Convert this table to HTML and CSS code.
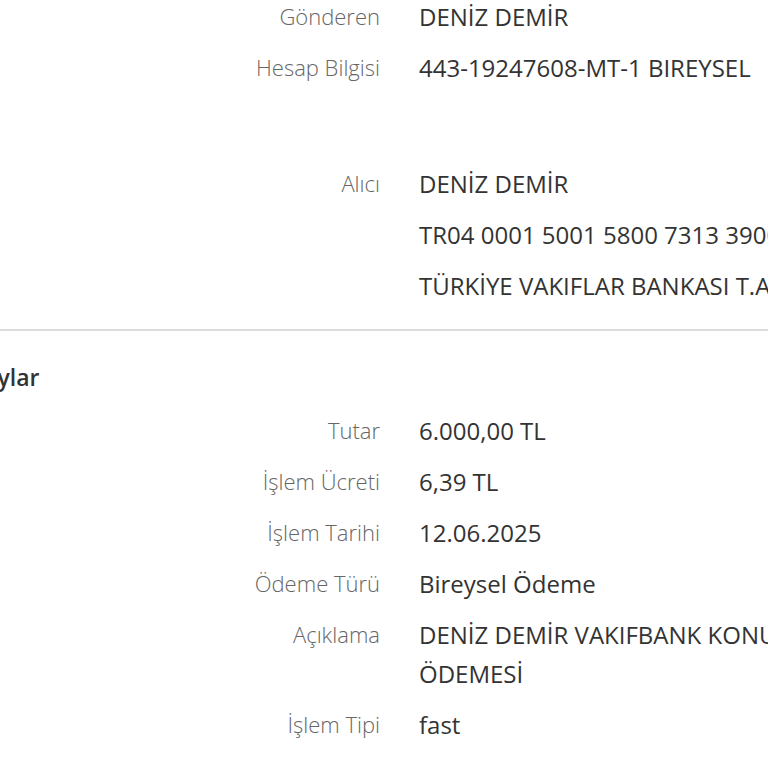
FILE: index.html
```html
<!DOCTYPE html>
<html lang="tr">
<head>
  <meta charset="UTF-8"/>
  <meta name="viewport" content="width=device-width, initial-scale=1.0"/>
  <title>Dekont</title>
  <link rel="stylesheet" href="styles.css">
</head>
<body>
  <div class="receipt">
    <dl class="info sender">
      <dt>Gönderen</dt>
      <dd>DENİZ DEMİR</dd>
      <dt>Hesap Bilgisi</dt>
      <dd>443-19247608-MT-1 BIREYSEL</dd>
    </dl>

    <dl class="info receiver">
      <dt>Alıcı</dt>
      <dd>DENİZ DEMİR</dd>
      <dt></dt>
      <dd>TR04 0001 5001 5800 7313 3900 01</dd>
      <dt></dt>
      <dd>TÜRKİYE VAKIFLAR BANKASI T.A.O.</dd>
    </dl>

    <hr class="divider">

    <h2 class="section-title">Detaylar</h2>
    <dl class="info details">
      <dt>Tutar</dt>
      <dd>6.000,00 TL</dd>
      <dt>İşlem Ücreti</dt>
      <dd>6,39 TL</dd>
      <dt>İşlem Tarihi</dt>
      <dd>12.06.2025</dd>
      <dt>Ödeme Türü</dt>
      <dd>Bireysel Ödeme</dd>
      <dt>Açıklama</dt>
      <dd class="wrap">DENİZ DEMİR VAKIFBANK KONUT ÖDEMESİ</dd>
      <dt>İşlem Tipi</dt>
      <dd>fast</dd>
    </dl>
  </div>
</body>
</html>
```

FILE: styles.css
```css
:root {
  --label-color: #666666;
  --value-color: #333333;
  --line-color: #dcdcdc;
  --label-col: 435px;
  --col-gap: 39px;
  --row-gap: 12px;
}

*, *::before, *::after { box-sizing: border-box; }

body {
  margin: 0;
  background: #ffffff;
  font-family: 'Open Sans', 'Noto Sans', sans-serif;
  color: var(--value-color);
  overflow: hidden;
}

.receipt {
  width: 1000px;
  margin-left: -55px;
  margin-top: -3px;
}

.info {
  display: grid;
  grid-template-columns: var(--label-col) 1fr;
  column-gap: var(--col-gap);
  row-gap: var(--row-gap);
  margin: 0;
  line-height: 39px;
}

.info dt {
  text-align: right;
  color: var(--label-color);
  font-size: 22px;
  font-weight: 300;
}

.info dd {
  margin: 0;
  font-size: 24px;
  white-space: nowrap;
}

.info dd.wrap {
  white-space: normal;
  width: 440px;
}

.receiver { margin-top: 77px; }

.divider {
  border: none;
  border-top: 2px solid var(--line-color);
  margin: 24px 0 0;
}

.section-title {
  margin: 26px 0 14px;
  font-size: 23px;
  font-weight: 600;
  line-height: 40px;
}
```
